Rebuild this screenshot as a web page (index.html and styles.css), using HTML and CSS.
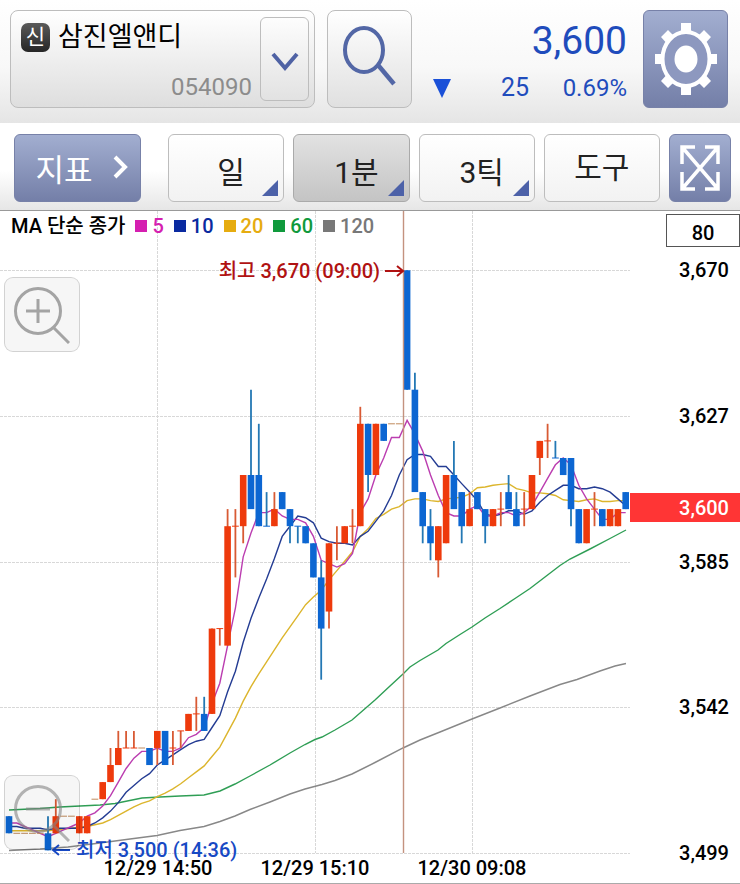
FILE: index.html
```html
<!DOCTYPE html>
<html lang="ko">
	<head>
		<meta charset="utf-8" />
		<meta name="viewport" content="width=device-width, initial-scale=1" />
		<title>삼진엘앤디 054090</title>
		<link rel="stylesheet" href="styles.css">
	</head>
	<body>
		<header class="top">
			<div class="stock">
				<div class="stock-info">
					<div class="stock-name"><span class="badge">신</span>삼진엘앤디</div>
					<div class="stock-code">054090</div>
				</div>
				<button class="drop" type="button" aria-label="종목 선택">
					<svg width="28" height="20" viewBox="0 0 28 20"><path d="M2 2L14 16L26 2" fill="none" stroke="#4f62a4" stroke-width="4"/></svg>
				</button>
			</div>
			<button class="search" type="button" aria-label="검색">
				<svg width="56" height="64" viewBox="0 0 56 64" fill="none" stroke="#5367a6">
					<ellipse cx="23" cy="26" rx="19" ry="22" stroke-width="4"/>
					<path d="M37 41L53 60" stroke-width="4.5"/>
				</svg>
			</button>
			<div class="quote">
				<div class="price">3,600</div>
				<div class="change">
					<svg class="down" width="18" height="19" viewBox="0 0 18 19"><path d="M0 0H18L9 19Z" fill="#1a50d8"/></svg>
					<span class="diff">25</span>
					<span class="rate">0.69%</span>
				</div>
			</div>
			<button class="setting blue" type="button" aria-label="설정">
				<svg width="64" height="74" viewBox="0 0 64 74">
					<path d="M27 1H37V13H27ZM27 61H37V73H27ZM1 32H11V42H1ZM53 32H63V42H53ZM7 15L14 8L23 17L16 25ZM57 15L50 8L41 17L48 25ZM7 59L14 66L23 57L16 49ZM57 59L50 66L41 57L48 49Z" fill="#fff"/>
					<ellipse cx="32" cy="37" rx="23.5" ry="27" fill="#8d98bf" stroke="#fff" stroke-width="4"/>
					<ellipse cx="32" cy="37" rx="11.5" ry="13.5" fill="#fff"/>
				</svg>
			</button>
		</header>

		<nav class="tools">
			<button class="index blue" type="button">지표
				<svg width="16" height="24" viewBox="0 0 16 24"><path d="M2 2L12 12L2 22" fill="none" stroke="#fff" stroke-width="4"/></svg>
			</button>
			<button class="tab more" type="button">일</button>
			<button class="tab more on" type="button">1분</button>
			<button class="tab more" type="button">3틱</button>
			<button class="tab" type="button">도구</button>
			<button class="full blue" type="button" aria-label="전체화면">
				<svg width="40" height="46" viewBox="0 0 40 46" fill="none" stroke="#fff" stroke-width="3.5">
					<path d="M2 19V2H15M25 2H38V19M38 27V44H25M15 44H2V27M2 2L38 44M38 2L2 44"/>
				</svg>
			</button>
		</nav>

		<main class="chart">
			<div class="legend">
				<span class="legend-title">MA 단순 종가</span>
				<span class="ma ma5">5</span>
				<span class="ma ma10">10</span>
				<span class="ma ma20">20</span>
				<span class="ma ma60">60</span>
				<span class="ma ma120">120</span>
			</div>
			<input class="count" type="text" value="80" aria-label="봉 개수">
			<svg class="plot" id="plot" viewBox="0 211 740 672"></svg>
			<button class="zoom zoom-in" type="button" aria-label="확대">
				<svg width="56" height="58" viewBox="0 0 56 58" fill="none" stroke="#a4a4a4" stroke-width="3">
					<circle cx="24" cy="25" r="22.5"/><path d="M12 25H36M24 13V37M39 41L55 57"/>
				</svg>
			</button>
			<button class="zoom zoom-out" type="button" aria-label="축소">
				<svg width="56" height="58" viewBox="0 0 56 58" fill="none" stroke="#858585" stroke-width="3">
					<circle cx="24" cy="25" r="22.5"/><path d="M12 25H36M39 41L55 57"/>
				</svg>
			</button>
		</main>
		<script src="chart.js"></script>
	</body>
</html>
```

FILE: styles.css
```css
*{
	margin: 0;
	padding: 0;
	box-sizing: border-box;
}
body{
	background: #fff;
	color: #000;
	font-family: Roboto, "Noto Sans CJK KR", sans-serif;
}
button{
	font-family: inherit;
	border: 1px solid #bdbdbd;
	border-radius: 6px;
	background: linear-gradient(#fff, #f2f2f2);
	cursor: pointer;
}
svg{
	display: block;
}
.blue{
	color: #fff;
	border-color: #7781a8;
	background: linear-gradient(#a2aed0, #747fa8);
}

/* 종목, 현재가 */
.top{
	display: flex;
	height: 123px;
	padding: 10px 12px 15px 10px;
	background: linear-gradient(#fff, #f8f8f8 55%, #e5e5e5);
}
.stock{
	display: flex;
	flex: 0 1 305px;
	padding: 6px 5px;
	border: 1px solid #bdbdbd;
	border-radius: 8px;
	background: linear-gradient(#fff, #dedede);
}
.stock-info{
	flex: 1;
	display: flex;
	flex-direction: column;
	justify-content: space-between;
	padding: 0 8px 0 5px;
}
.stock-name{
	display: flex;
	align-items: center;
	gap: 8px;
	font-size: 27px;
	line-height: 40px;
	white-space: nowrap;
}
.badge{
	width: 29px;
	height: 29px;
	border-radius: 7px;
	background: linear-gradient(#5a5a5a, #262626);
	color: #fff;
	font-size: 21px;
	line-height: 28px;
	text-align: center;
}
.stock-code{
	color: #8c8c8c;
	font-size: 24px;
	line-height: 28px;
	text-align: right;
}
.drop{
	display: flex;
	align-items: center;
	justify-content: center;
	width: 49px;
	padding-top: 6px;
	background: linear-gradient(#fdfdfd, #e2e2e2);
}
.search{
	width: 85px;
	margin-left: 12px;
	padding: 0 0 6px 13px;
	border-radius: 8px;
	background: linear-gradient(#fff, #e0e0e0);
}
.quote{
	flex: 1;
	padding: 8px 16px 0 21px;
	color: #1f4cbc;
}
.price{
	font-size: 39px;
	line-height: 46px;
	text-align: right;
}
.change{
	display: flex;
	align-items: center;
	font-size: 25px;
	line-height: 48px;
}
.diff{
	flex: 1;
	text-align: right;
}
.rate{
	width: 98px;
	font-size: 24px;
	text-align: right;
}
.setting{
	display: flex;
	align-items: center;
	justify-content: center;
	width: 85px;
}

/* 차트 도구 */
.tools{
	display: flex;
	gap: 9px;
	height: 88px;
	padding: 11px 9px 8px 14px;
	border-bottom: 1px solid #999;
	background: linear-gradient(#fff, #fff 55%, #e6e6e6);
}
.index{
	display: flex;
	align-items: center;
	justify-content: center;
	gap: 20px;
	width: 127px;
	margin-right: 18px;
	padding: 0 0 2px 9px;
	font-size: 31px;
}
.tab{
	position: relative;
	flex: 1;
	padding: 0 5px;
	color: #222;
	font-size: 30px;
	line-height: 40px;
}
.more{
	padding: 10px 0 0 10px;
}
.more::after{
	content: "";
	position: absolute;
	right: 5px;
	bottom: 5px;
	border-left: 16px solid transparent;
	border-bottom: 16px solid #4c61a8;
}
.on{
	border-color: #aaa;
	background: linear-gradient(#e2e2e2, #c4c4c4);
}
.full{
	display: flex;
	align-items: center;
	justify-content: center;
	width: 62px;
}

/* 차트 */
.chart{
	position: relative;
	border-bottom: 1px solid #aaa;
}
.plot{
	width: 100%;
	height: auto;
}
.plot text{
	font-size: 20px;
	font-weight: 500;
}
.legend{
	position: absolute;
	top: 0;
	left: 11px;
	display: flex;
	gap: 10px;
	font-size: 20px;
	font-weight: 500;
	line-height: 30px;
}
.ma{
	display: flex;
	align-items: center;
	gap: 5px;
}
.ma::before{
	content: "";
	width: 12px;
	height: 12px;
	background: currentColor;
}
.ma5{ color: #d51fb0; }
.ma10{ color: #0a2aa0; }
.ma20{ color: #e6ac10; }
.ma60{ color: #109a3c; }
.ma120{ color: #787878; }
.count{
	position: absolute;
	top: 3px;
	right: 0;
	width: 74px;
	height: 33px;
	padding-top: 4px;
	border: 1px solid #555;
	background: #fff;
	font: 500 20px Roboto, sans-serif;
	text-align: center;
}
.zoom{
	position: absolute;
	left: 4px;
	width: 76px;
	height: 75px;
	padding: 0 0 0 9px;
	border-color: rgba(0, 0, 0, .15);
	border-radius: 9px;
	background: rgba(0, 0, 0, .035);
}
.zoom-in{
	top: 66px;
}
.zoom-out{
	bottom: 33px;
}
.zoom-out svg{
	opacity: .6;
}
```

FILE: chart.js
```js
//시가, 고가, 저가, 종가
var candles = [
	[3510,3510,3505,3505],[3505,3505,3505,3505],[3505,3505,3505,3505],[3505,3505,3505,3505],
	[3505,3505,3505,3505],[3505,3510,3500,3500],[3505,3515,3505,3510],[3510,3510,3510,3510],
	[3510,3510,3510,3510],[3505,3510,3505,3510],[3505,3510,3505,3510],[3515,3515,3515,3515],
	[3515,3520,3515,3520],[3520,3530,3520,3525],[3525,3535,3525,3530],[3530,3535,3530,3530],
	[3530,3535,3530,3530],[3530,3530,3530,3530],[3530,3530,3525,3525],[3530,3535,3525,3535],
	[3535,3535,3525,3525],[3530,3535,3525,3530],[3535,3535,3530,3535],[3535,3540,3535,3540],
	[3540,3545,3535,3540],[3540,3545,3535,3535],[3540,3565,3540,3565],[3565,3565,3560,3565],
	[3560,3600,3560,3595],[3595,3600,3580,3595],[3595,3610,3590,3610],[3610,3635,3600,3600],
	[3610,3625,3595,3595],[3595,3605,3595,3595],[3595,3605,3595,3600],[3605,3605,3600,3600],
	[3600,3600,3590,3595],[3595,3595,3590,3595],[3595,3595,3590,3590],[3590,3590,3580,3580],
	[3580,3585,3550,3565],[3570,3590,3565,3590],[3590,3595,3585,3590],[3590,3595,3590,3595],
	[3595,3600,3590,3595],[3595,3630,3595,3625],[3625,3625,3605,3610],[3610,3625,3610,3625],
	[3625,3625,3620,3620],[3625,3625,3625,3625],[3625,3625,3625,3625],[3670,3670,3635,3635],
	[3635,3640,3605,3605],[3605,3605,3590,3595],[3595,3600,3585,3590],[3585,3595,3580,3595],
	[3590,3610,3590,3610],[3610,3620,3600,3600],[3605,3605,3590,3595],[3595,3605,3595,3600],
	[3605,3605,3600,3600],[3600,3600,3590,3595],[3595,3600,3595,3600],[3600,3605,3595,3600],
	[3605,3610,3600,3600],[3600,3605,3595,3595],[3600,3605,3595,3600],[3600,3610,3600,3610],
	[3615,3620,3610,3620],[3620,3625,3615,3620],[3615,3620,3615,3615],[3615,3615,3610,3610],
	[3615,3615,3595,3600],[3600,3600,3590,3590],[3590,3600,3590,3600],[3600,3605,3595,3600],
	[3600,3600,3595,3595],[3595,3600,3595,3600],[3595,3600,3595,3600],[3605,3605,3600,3600]
];
//이전 종가 (이동평균 계산용)
var before = [3505,3505,3505,3505,3500,3505,3505,3505,3505,3505,3505,3510,3505,3505,3505,3505,3510,3510,3510];

//장기 이동평균선 좌표
var ma60 = "9,810 40,808.5 60,807 100,805 115,803.5 142,798 160,797 180,796 204,795 220,791 235,784 250,776 270,765 290,753 305,744.5 315,739.5 322,737 335,730 352,720 375,700 390,686 403,674 410,667 420,660.5 438,650 446,643.5 460,634.5 472,627 485,618 500,608.5 515,598.5 530,588.5 545,577 560,565.5 570,559 590,549 610,538.5 626,530";
var ma120 = "9,850.5 40,849 68,847 100,843 130,839 157,835.5 180,830.5 204,826.5 220,821.5 235,816 250,809.5 270,802 290,794 305,789 322,784.5 335,780.5 352,774 375,762.5 403,748 420,740 440,732 472,719 500,708 530,696 560,684.5 577,679.5 600,671 615,666 626,663.5";

var STEP = 7.806;
var html = "";

function getX(i){
	return (9 + i * STEP).toFixed(1);
}
function getY(price){
	return (270.3 + (3670 - price) * 3.412).toFixed(1);
}
function line(x1,y1,x2,y2,color,more){
	html += '<line x1="'+x1+'" y1="'+y1+'" x2="'+x2+'" y2="'+y2+'" stroke="'+color+'" '+(more || "")+'/>';
}
function curve(points,color){
	html += '<polyline points="'+points+'" fill="none" stroke="'+color+'" stroke-width="1.4"/>';
}
function text(x,y,str,color,anchor){
	html += '<text x="'+x+'" y="'+y+'" fill="'+color+'" text-anchor="'+anchor+'">'+str+'</text>';
}
function average(n){
	var all = before.concat(candles.map(function (c){ return c[3]; }));
	var points = [];
	for( var i = 0; i < candles.length; i++ ){
		var sum = 0;
		for( var j = 0; j < n; j++ ){
			sum += all[i + before.length - j];
		}
		points.push(getX(i) + "," + getY(sum / n));
	}
	return points.join(" ");
}

//눈금선
[270.5,416.5,562.5,707.5,853.5].forEach(function (y){
	line(0,y,630,y,"#d8d8d8",'stroke-dasharray="3 1"');
});
[157.5,315.5,472.5].forEach(function (x){
	line(x,211,x,853,"#d8d8d8",'stroke-dasharray="3 1"');
});

//이동평균선
curve(ma120,"#888");
curve(ma60,"#2f9e55");
curve(average(20),"#dcb52c");
curve(average(10),"#243c93");
curve(average(5),"#bb3db0");

//봉
candles.forEach(function (c,i){
	var x = Number(getX(i));
	var down = c[3] < c[0] || i === 33 || i === 37 || i === 70;
	var color = down ? "#0c66d2" : "#ee3a0c";
	if( c[1] !== c[2] ){
		line(x,getY(c[1]),x,getY(c[2]),down ? "#2478b4" : "#d85a34",'stroke-width="1.8"');
	}
	if( c[0] === c[3] ){
		line(x - 3.4,getY(c[0]),x + 3.4,getY(c[0]),c[1] === c[2] ? "#c08a5c" : color);
	}else{
		var top = getY(Math.max(c[0],c[3]));
		html += '<rect x="'+(x - 3.3)+'" y="'+top+'" width="6.6" height="'+(Math.abs(c[0] - c[3]) * 3.412)+'" fill="'+color+'"/>';
	}
});

//날짜 구분선
line(403.5,211,403.5,853,"#c4927f",'stroke-width="1.4"');

//최고, 최저
text(380,278,"최고 3,670 (09:00)","#b01212","end");
html += '<path d="M385 271H402M397 266L403 271L397 276" fill="none" stroke="#b01212" stroke-width="2"/>';
text(76,857,"최저 3,500 (14:36)","#1749c4","start");
html += '<path d="M70 850H54M59 845L53 850L59 855" fill="none" stroke="#1749c4" stroke-width="2"/>';

//가격, 시간
html += '<rect x="630" y="493" width="110" height="29" fill="#ff3535"/>';
[[277,"3,670"],[423,"3,627"],[569,"3,585"],[714,"3,542"],[860,"3,499"]].forEach(function (p){
	text(729,p[0],p[1],"#000","end");
});
text(729,515,"3,600","#fff","end");
text(158,875,"12/29 14:50","#000","middle");
text(315,875,"12/29 15:10","#000","middle");
text(472,875,"12/30 09:08","#000","middle");

document.getElementById("plot").innerHTML = html;
```
